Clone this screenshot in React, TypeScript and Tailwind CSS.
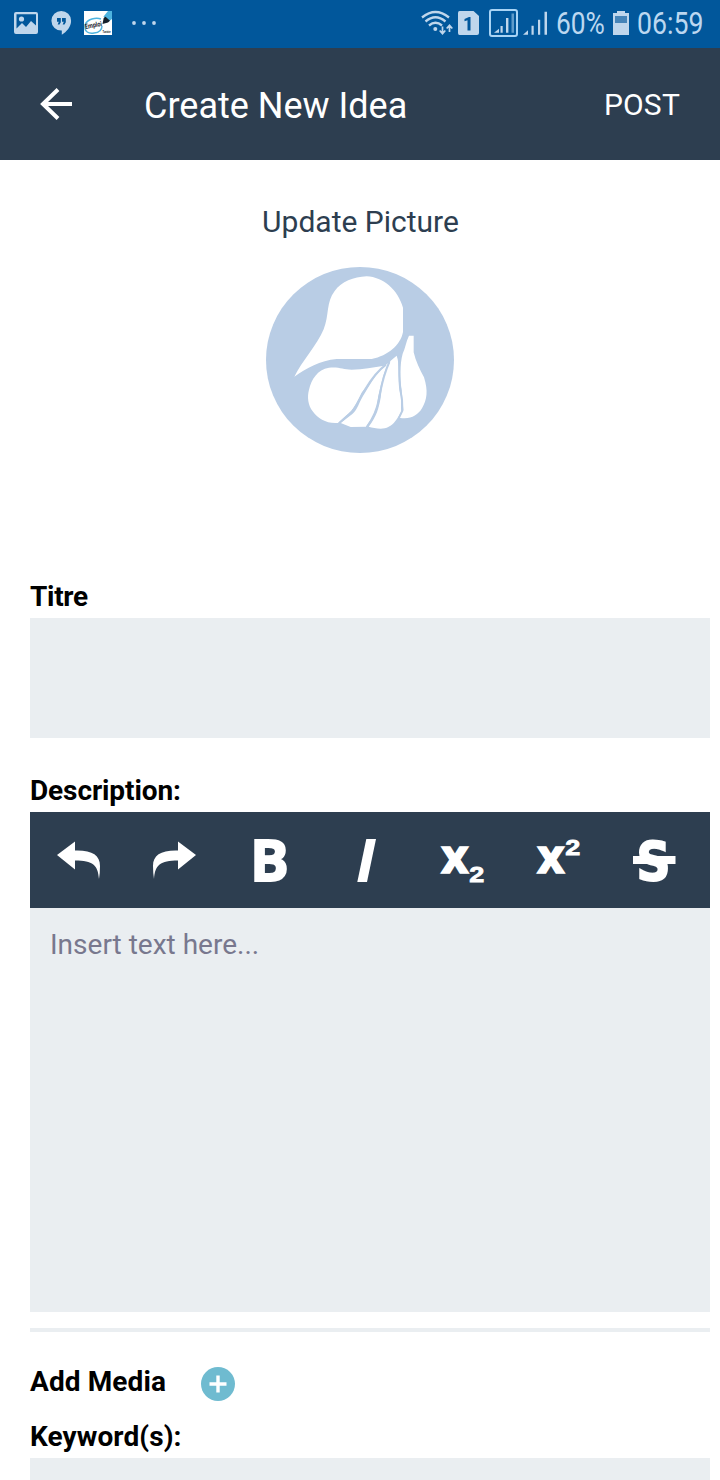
import React from 'react';

function StatusBar() {
  return (
    <div className="flex h-12 shrink-0 items-center bg-[#01579b] text-[#bcd7f0]">
      <svg width="170" height="48" viewBox="0 0 170 48" className="shrink-0">
        <path fill="#bfd6ec" fillRule="evenodd" d="M16 12h20q2 0 2 2v18q0 2-2 2H16q-2 0-2-2V14q0-2 2-2Zm0.500 2.200v14.300l5.500-5.500 4 4 5-6 5 4.500V14.200Z" />
        <circle cx="21.500" cy="19" r="2.600" fill="#bfd6ec" />
        <path fill="#bfd6ec" d="M61.300 11a9.800 9.800 0 0 1 9.800 9.800c0 6-4.500 11-9.300 14v-4.200a9.900 9.900 0 0 1-10.400-9.800A9.800 9.800 0 0 1 61.300 11Z" />
        <path fill="#01579b" d="M57 18h3.800v4.200l-1.300 2.300h-1.800l1.100-2.700H57Zm5 0h3.800v4.200l-1.300 2.300h-1.800l1.100-2.700H62Z" />
        <rect x="84" y="11" width="28" height="24" fill="#fff" />
        <path d="M101 19C96 17 87 19 85 25c-1 7 4 9 9 8 5-.5 8-3 8-7" fill="none" stroke="#4db3df" strokeWidth="1.400" />
        <path fill="#4db3df" d="M103.500 16.500l4.500-5.500h4v8l-4 3Z" />
        <path fill="#15202b" d="M102.500 24l1.200-6 1.800-1.200 4.500 4-2 1.800Z" />
        <text x="85.500" y="29" fontSize="7" fontWeight="700" fontFamily="Roboto, sans-serif" fill="#15202b" textLength="17" lengthAdjust="spacingAndGlyphs" transform="rotate(-11 86 29)">Emploi</text>
        <text x="102.500" y="33" fontSize="3.500" fontWeight="700" fontFamily="Roboto, sans-serif" fill="#15202b" textLength="8" lengthAdjust="spacingAndGlyphs">Tunisie</text>
        <g fill="#bfd6ec"><circle cx="134" cy="23" r="1.900" /><circle cx="144" cy="23" r="1.900" /><circle cx="154" cy="23" r="1.900" /></g>
      </svg>
      <svg width="135" height="48" viewBox="415 0 135 48" className="ml-[245px] shrink-0">
        <g fill="none" stroke="#bfd6ec" strokeWidth="2.300">
          <path d="M422 17.500Q435.500 6.500 449 17.500" />
          <path d="M425.500 21.500Q435.500 13 445.500 21.500" />
          <path d="M429 25.500Q435.500 20 442 25.500" />
        </g>
        <circle cx="435.300" cy="29" r="2" fill="#bfd6ec" />
        <path d="M442.500 26.500V33M439.700 30.500l2.800 3.200 2.800-3.200M449.500 32V25.500M446.700 28.500l2.800-3.200 2.800 3.200" fill="none" stroke="#bfd6ec" strokeWidth="1.700" />
        <path fill="#bfd6ec" d="M459.500 11h14l5.500 5v17q0 2-2 2h-17.500q-1.500 0-1.500-2V13q0-2 1.500-2Z" />
        <path fill="#01579b" d="M464.500 19l4.500-2h1.500v13.500h-3V20.300l-3 1Z" />
        <rect x="490" y="10" width="27" height="26" rx="2" fill="none" stroke="#a9d4f5" strokeWidth="2" />
        <path fill="#bfd6ec" d="M494 32.800l5-4v4ZM500.500 26h2.200v6.800h-2.200ZM506 18h2.400v14.800H506Z" />
        <path fill="#5f9bc9" d="M511.500 13.500h2.500v19.300h-2.500Z" />
        <path fill="#bfd6ec" d="M523 34.800l5-4.500v4.500Zm8.500-9h2.200v9h-2.200Zm6.500-6h2.200v15H538Zm6.500-8h2.500v23h-2.500Z" />
      </svg>
      <div className="ml-[6px] w-[49px] shrink-0"><span className="inline-block origin-left scale-x-[0.85] whitespace-nowrap text-[31px] leading-[48px]">60%</span></div>
      <svg width="16" height="48" viewBox="613 0 16 48" className="ml-2 shrink-0">
        <path fill="#bfd6ec" d="M617 11h8v2h4v22h-16V13h4Z" />
        <path fill="#4684b8" d="M615 16h12v7h-12Z" />
      </svg>
      <div className="ml-2 w-[67px] shrink-0"><span className="inline-block origin-left scale-x-[0.86] whitespace-nowrap text-[31px] leading-[48px]">06:59</span></div>
    </div>
  );
}

function ToolButton({ children }: { children: React.ReactNode }) {
  return (
    <button className="h-24 w-24 shrink-0">
      <svg width="96" height="96" viewBox="0 0 96 96" fill="#fff" fontWeight="700" fontFamily="'Open Sans', sans-serif">{children}</svg>
    </button>
  );
}

const arrow = 'M27 43 45 29.500V38.500C62 38 70 43 70 54Q70 61 69 67C68 53 63 48.500 45 48.500V57.500Z';

function Toolbar() {
  return (
    <div className="flex h-24 bg-[#2d3e50]">
      <ToolButton><path d={arrow} /></ToolButton>
      <ToolButton><path d={arrow} transform="translate(97 0) scale(-1 1)" /></ToolButton>
      <ToolButton><text x="47.500" y="69.300" fontSize="58" textAnchor="middle" stroke="#fff" strokeWidth="1.800">B</text></ToolButton>
      <ToolButton><path d="M48.300 27H58L49 70H39.300Z" /></ToolButton>
      <ToolButton>
        <text x="27.300" y="61.300" fontSize="47" stroke="#fff" strokeWidth="1.600">x</text>
        <text x="55.300" y="69.800" fontSize="22" fontFamily="'Liberation Sans', sans-serif" textLength="15" lengthAdjust="spacingAndGlyphs" stroke="#fff" strokeWidth="0.800">2</text>
      </ToolButton>
      <ToolButton>
        <text x="27.300" y="61.300" fontSize="47" stroke="#fff" strokeWidth="1.600">x</text>
        <text x="55.300" y="43" fontSize="22" fontFamily="'Liberation Sans', sans-serif" textLength="15" lengthAdjust="spacingAndGlyphs" stroke="#fff" strokeWidth="0.800">2</text>
      </ToolButton>
      <ToolButton>
        <text x="30.500" y="67.800" fontSize="53" fontFamily="'DejaVu Sans', sans-serif" stroke="#fff" strokeWidth="2" textLength="34" lengthAdjust="spacingAndGlyphs">S</text>
        <rect x="27" y="44" width="42.500" height="8" />
      </ToolButton>
    </div>
  );
}

function IdeaLogo() {
  return (
    <svg width="190" height="188" viewBox="45 228 570 564" className="mx-auto mt-[26px] block">
      <ellipse cx="330" cy="510" rx="282" ry="279" fill="#b9cde5" />
      <path fill="#fff" d="M133 560C155 515 201 466 221 418C238 375 228 337 254 303C275 274 310 261 350 259C400 261 444 300 459 353V426C452 464 415 497 365 507H260C210 511 170 535 133 560Z" />
      <path fill="#fff" d="M237 533C267 530 278 538 305 539C340 538 370 532 403 527C375 550 360 577 336 607C319 640 310 661 294 672L264 699C230 702 204 686 188 664C174 645 171 621 177 599C184 569 202 538 237 533Z" />
      <path fill="#fff" d="M418 516C400 544 395 578 384 622C382 653 371 680 348 710L302 711L272 699L307 672C323 659 326 637 345 608C365 576 378 549 418 516Z" />
      <path fill="#fff" d="M440 497C450 525 444 561 449 603C458 626 451 647 454 665C442 685 431 704 416 710C397 721 374 714 356 710C380 679 386 655 392 623C397 580 403 543 422 512Z" />
      <path fill="#fff" d="M477 437H491V487C497 513 509 538 522 562C535 603 531 629 516 655C503 677 478 690 448 683L460 660L455 601C450 565 449 525 458 491C466 474 468 455 477 437Z" />
      <g fill="none" stroke="#b9cde5" strokeWidth="6">
        <path d="M408 524C370 552 352 588 338 610C322 640 314 660 299 671L267 700" />
        <path d="M418 516C398 560 394 590 387 626C381 660 370 685 350 712" />
        <path d="M447 492C449 530 445 565 452 605C458 630 457 648 457 662L446 685" />
      </g>
    </svg>
  );
}

export default function App() {
  return (
    <main className="flex h-[1480px] w-[720px] flex-col overflow-hidden bg-white font-['Roboto',sans-serif] text-black">
      <StatusBar />
      <header className="flex h-28 shrink-0 items-center bg-[#2d3e50] pl-10 pr-10 text-white">
        <svg width="32" height="32" viewBox="0 0 32 32" fill="none" stroke="#fff" strokeWidth="4"><path d="M18 1.500 3 16l15 14.500M2.500 16H32" /></svg>
        <h1 className="ml-[72px] mt-[3px] text-[36px] leading-[42px]">Create New Idea</h1>
        <button className="ml-auto mt-[2px] text-[30px] leading-9 tracking-[0.2px]">POST</button>
      </header>
      <section className="h-[417px] shrink-0 pt-[44px] text-center">
        <p className="pl-px text-[30px] leading-[36px] text-[#2d3e50]">Update Picture</p>
        <IdeaLogo />
      </section>
      <section className="flex flex-col pl-[30px] pr-[10px]">
        <label className="h-[41px] text-[28px] font-bold leading-[40px] tracking-[-0.3px]">Titre</label>
        <div className="h-[120px] bg-[#eaeef1]" />
        <label className="mt-[33px] h-[41px] text-[28px] font-bold leading-[40px] tracking-[-0.1px]">Description:</label>
        <Toolbar />
        <div className="h-[404px] bg-[#eaeef1] px-5 pt-[19px] text-[28px] leading-9 text-[#78788e]">Insert text here...</div>
        <div className="mt-4 h-1 bg-[#eaeef1]" />
        <div className="flex h-[85px] items-start pt-[30px]">
          <span className="w-[136px] text-[28px] font-bold leading-[40px] tracking-[0.1px]">Add Media</span>
          <svg width="34" height="34" viewBox="0 0 34 34" className="ml-[35px] mt-[5px]">
            <circle cx="17" cy="17" r="17" fill="#6fbbd0" />
            <path d="M17 8.500v17M8.500 17h17" stroke="#fff" strokeWidth="3.400" />
          </svg>
        </div>
        <label className="h-[41px] text-[28px] font-bold leading-[40px] tracking-[0.1px]">Keyword(s):</label>
        <div className="h-[22px] bg-[#eaeef1]" />
      </section>
    </main>
  );
}
